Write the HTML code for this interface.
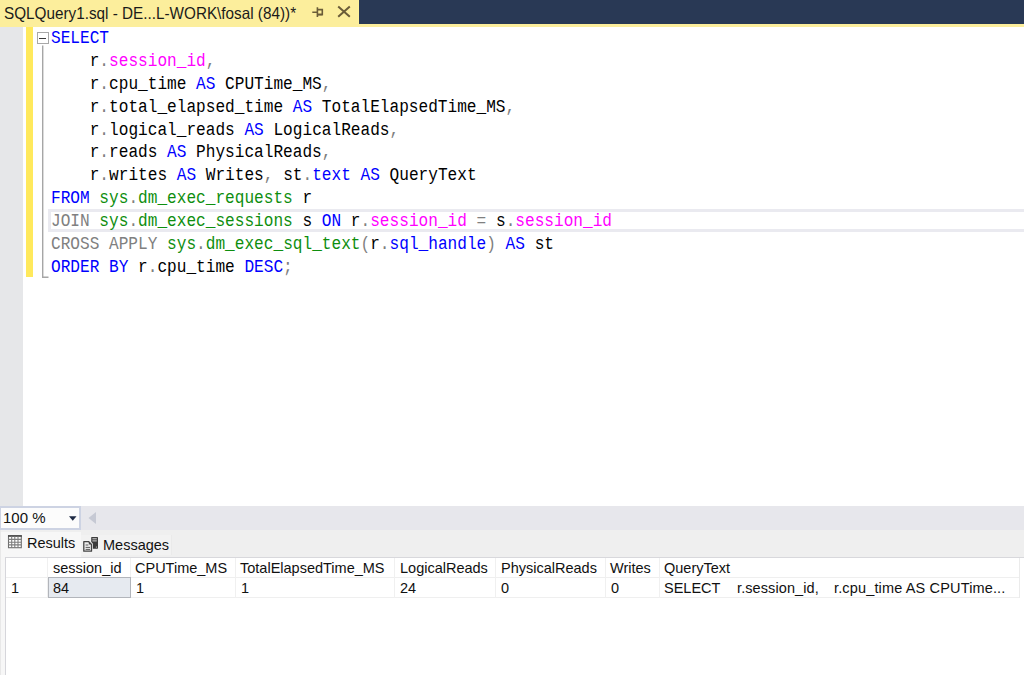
<!DOCTYPE html>
<html><head><meta charset="utf-8">
<style>
*{margin:0;padding:0;box-sizing:border-box}
html,body{width:1024px;height:675px;overflow:hidden;background:#fff;position:relative}
body{font-family:"Liberation Sans",sans-serif}
.abs{position:absolute}
#navy{left:0;top:0;width:1024px;height:24px;background:#293955}
#tabline{left:0;top:24px;width:1024px;height:3px;background:#FCEE9C}
#tab{left:0;top:0;width:359px;height:27px;background:#FCEE9C}
#tabtxt{left:4px;top:3px;font-size:16.5px;line-height:20px;color:#1a1a1a;white-space:pre;transform:scaleX(0.926);transform-origin:0 0}
#gutter{left:0;top:27px;width:23px;height:479px;background:#E6E7E9}
#chbar{left:26px;top:27px;width:7px;height:250px;background:#FFE95C}
#code{left:51px;top:27px;font-family:"Liberation Mono",monospace;font-size:17.5px;line-height:22.87px;transform:scaleX(0.9208);transform-origin:0 0;white-space:pre;color:#000}
.k{color:#0000FF}.g{color:#808080}.m{color:#FF00FF}.s{color:#0E8E0E}
#curline{left:48px;top:209px;width:976px;height:23px;border:3px solid #EAEAF0;border-right:none}
#foldbox{left:37px;top:32px;width:11.5px;height:12px;border:1px solid #A8A8A8;background:#fff}
#foldminus{left:39px;top:38px;width:7px;height:1px;background:#3A3A3A}
#foldline{left:42px;top:46px;width:1px;height:231px;background:#A0A0A0}
#foldend{left:42px;top:277px;width:6px;height:1px;background:#A0A0A0}
#zoombar{left:0;top:506px;width:1024px;height:24px;background:#E7E7EC}
#combo{left:0;top:506px;width:81px;height:23.5px;background:#FCFCFC;border:2px solid #CDD3E3;border-left-width:1px}
#combotxt{left:3px;top:509px;font-size:15px;line-height:17px;color:#111}
#tabsarea{left:0;top:530px;width:1024px;height:27px;background:#EFEFEF}
#restab{left:1px;top:532px;width:80px;height:143px;background:#F7F7F7}
#msgtab{left:81px;top:535px;width:91px;height:20px;background:#F2F2F2;border-right:1px solid #EAEAEA}
#grid{left:5px;top:557px;width:1019px;height:118px;background:#fff;border-left:1px solid #D6D6DB;border-top:1px solid #D8D8DC}
.gt{position:absolute;font-size:14.5px;line-height:17px;color:#111;white-space:pre}
</style></head><body>
<div id="navy" class="abs"></div>
<div id="tabline" class="abs"></div>
<div id="tab" class="abs"></div>
<div class="abs" style="left:358px;top:0;width:1px;height:24px;background:#FFF39A"></div>
<div id="tabtxt" class="abs">SQLQuery1.sql - DE...L-WORK\fosal (84))*</div>
<svg class="abs" style="left:0;top:0" width="359" height="27">
<g stroke="#6A5C38" stroke-width="1.6" fill="none">
<path d="M312.3 12.2H317.5M317.4 7.3V17M317.5 9.6H322.3V14.5H317.5"/>
<path d="M317.5 14.6H322.6" stroke-width="1.8"/>
<path d="M338.2 6.6L349.8 16.8M349.8 6.6L338.2 16.8" stroke-width="2"/>
</g></svg>

<div id="gutter" class="abs"></div>
<div id="chbar" class="abs"></div>
<div id="curline" class="abs"></div>
<div id="foldbox" class="abs"></div>
<div id="foldminus" class="abs"></div>
<svg class="abs" style="left:0;top:0" width="60" height="290"><path d="M42.7 45.5V277.2H48.5" fill="none" stroke="#A6A6A6" stroke-width="1.4"/></svg>
<div id="code" class="abs"><span class="k">SELECT</span>
    r<span class="g">.</span><span class="m">session_id</span><span class="g">,</span>
    r<span class="g">.</span>cpu_time <span class="k">AS</span> CPUTime_MS<span class="g">,</span>
    r<span class="g">.</span>total_elapsed_time <span class="k">AS</span> TotalElapsedTime_MS<span class="g">,</span>
    r<span class="g">.</span>logical_reads <span class="k">AS</span> LogicalReads<span class="g">,</span>
    r<span class="g">.</span>reads <span class="k">AS</span> PhysicalReads<span class="g">,</span>
    r<span class="g">.</span>writes <span class="k">AS</span> Writes<span class="g">,</span> st<span class="g">.</span><span class="k">text</span> <span class="k">AS</span> QueryText
<span class="k">FROM</span> <span class="s">sys</span><span class="g">.</span><span class="s">dm_exec_requests</span> r
<span class="g">JOIN</span> <span class="s">sys</span><span class="g">.</span><span class="s">dm_exec_sessions</span> s <span class="k">ON</span> r<span class="g">.</span><span class="m">session_id</span> <span class="g">=</span> s<span class="g">.</span><span class="m">session_id</span>
<span class="g">CROSS APPLY</span> <span class="s">sys</span><span class="g">.</span><span class="s">dm_exec_sql_text</span><span class="g">(</span>r<span class="g">.</span><span class="k">sql_handle</span><span class="g">)</span> <span class="k">AS</span> st
<span class="k">ORDER BY</span> r<span class="g">.</span>cpu_time <span class="k">DESC</span><span class="g">;</span></div>

<div id="zoombar" class="abs"></div>
<div id="combo" class="abs"></div>
<div id="combotxt" class="abs">100 %</div>

<div id="tabsarea" class="abs"></div>
<div id="restab" class="abs"></div>
<div class="abs" style="left:0;top:530px;width:1px;height:145px;background:#E8E8E8"></div>
<div id="msgtab" class="abs"></div>

<svg class="abs" style="left:0;top:500px" width="110" height="60">
<path d="M69 16.3H76.5L72.75 20.7Z" fill="#1E2A44"/>
<path d="M96 12V24L88.5 18Z" fill="#C6C9D4"/>
<g transform="translate(0,30)">
<rect x="8.5" y="5.7" width="12.8" height="12" fill="#fff" stroke="#6E6E6E" stroke-width="1.1"/>
<rect x="8" y="5.2" width="13.8" height="1.6" fill="#4A4A4A"/>
<path d="M11.7 6.5V17.7M14.8 6.5V17.7M18 6.5V17.7M8.5 9.4H21.3M8.5 12.2H21.3M8.5 14.9H21.3" stroke="#7E7E7E" stroke-width="1.1"/>
</g>
<g transform="translate(0,30)">
<rect x="91.2" y="7" width="6.8" height="11.7" rx="0.6" fill="#3C3C3C"/>
<path d="M92.4 8.8H96.8M92.4 10.9H96.8" stroke="#D8D8D8" stroke-width="1"/>
<circle cx="96.4" cy="17" r="0.6" fill="#E0E0E0"/>
<path d="M83.6 11.4H88.8L91.6 14.2V21.5H83.6Z" fill="none" stroke="#F2F2F2" stroke-width="2.6" stroke-linejoin="round"/>
<path d="M83.8 11.7H88.8L91.5 14.4V21.2H83.8Z" fill="#EDEDED" stroke="#454545" stroke-width="1.3" stroke-linejoin="round"/>
<path d="M88.8 11.7V14.4H91.5Z" fill="#454545"/>
<path d="M85.6 15H88.3M85.6 17.4H90M85.6 19.4H90" stroke="#5A5A5A" stroke-width="1"/>
</g>
</svg>
<div class="gt" style="left:27px;top:535px">Results</div>
<div class="gt" style="left:103px;top:537px">Messages</div>

<div id="grid" class="abs"></div>
<div class="abs" style="left:6px;top:577px;width:1014px;height:1px;background:#EFEFEF"></div>
<div class="abs" style="left:6px;top:597px;width:1014px;height:1px;background:#EFEFEF"></div>
<div class="abs" style="left:47px;top:558px;width:1px;height:40px;background:#F0F0F0"></div>
<div class="abs" style="left:130px;top:558px;width:1px;height:40px;background:#F0F0F0"></div>
<div class="abs" style="left:235px;top:558px;width:1px;height:40px;background:#F0F0F0"></div>
<div class="abs" style="left:394px;top:558px;width:1px;height:40px;background:#F0F0F0"></div>
<div class="abs" style="left:495px;top:558px;width:1px;height:40px;background:#F0F0F0"></div>
<div class="abs" style="left:605px;top:558px;width:1px;height:40px;background:#F0F0F0"></div>
<div class="abs" style="left:659px;top:558px;width:1px;height:40px;background:#F0F0F0"></div>
<div class="abs" style="left:1019px;top:558px;width:1px;height:40px;background:#EBEBEB"></div>
<div class="abs" style="left:48px;top:577px;width:83px;height:21px;background:#E6EAF0;border:1px solid #B2B5BB"></div>

<div class="gt" style="left:53px;top:560px">session_id</div>
<div class="gt" style="left:135px;top:560px">CPUTime_MS</div>
<div class="gt" style="left:240px;top:560px">TotalElapsedTime_MS</div>
<div class="gt" style="left:400px;top:560px">LogicalReads</div>
<div class="gt" style="left:501px;top:560px">PhysicalReads</div>
<div class="gt" style="left:610px;top:560px">Writes</div>
<div class="gt" style="left:664px;top:560px">QueryText</div>
<div class="gt" style="left:11px;top:580px">1</div>
<div class="gt" style="left:53px;top:580px">84</div>
<div class="gt" style="left:136px;top:580px">1</div>
<div class="gt" style="left:241px;top:580px">1</div>
<div class="gt" style="left:400px;top:580px">24</div>
<div class="gt" style="left:501px;top:580px">0</div>
<div class="gt" style="left:611px;top:580px">0</div>
<div class="gt" style="left:664px;top:580px">SELECT</div>
<div class="gt" style="left:737px;top:580px;letter-spacing:0.1px">r.session_id,</div>
<div class="gt" style="left:834px;top:580px;letter-spacing:0.15px">r.cpu_time AS CPUTime...</div>
</body></html>
